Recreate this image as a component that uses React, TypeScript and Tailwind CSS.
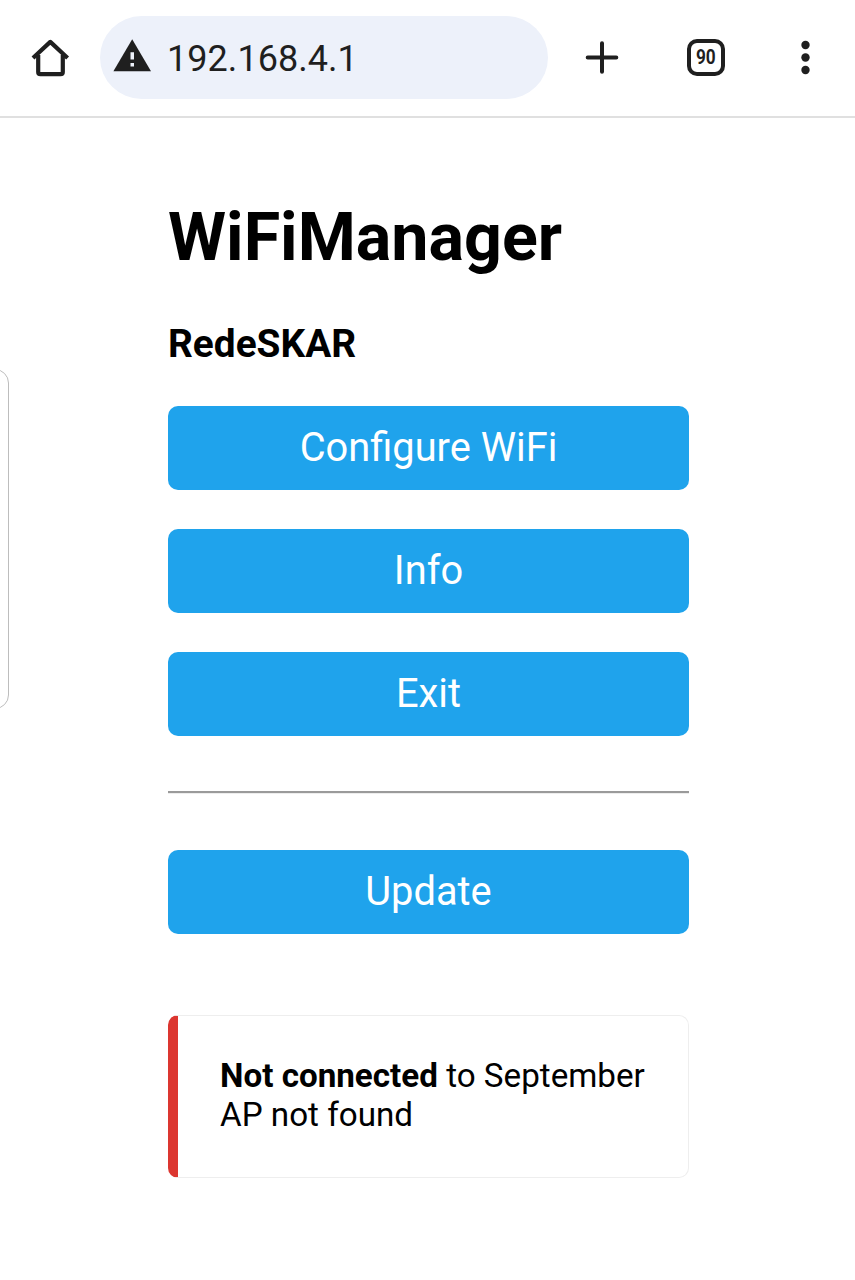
import type { ReactNode } from "react";

function HomeIcon() {
  return (
    <svg className="h-10 w-10 shrink-0" viewBox="0 0 40 40" fill="none" stroke="#1f1f1f" strokeWidth="4.2">
      <path d="M3 20 L20.3 3.9 L37.6 20" strokeLinejoin="round" />
      <path d="M8.2 17 V34 Q8.2 36.2 10.4 36.2 H30.6 Q32.8 36.2 32.8 34 V17" />
    </svg>
  );
}

function WarningIcon() {
  return (
    <svg className="h-[33px] w-[38px] shrink-0" viewBox="0 0 38 33">
      <path d="M19.2 0.3 L38 32.2 H0.4 Z" fill="#1f1f1f" />
      <path d="M17.5 13.2 h3.5 v7.4 h-3.5 Z M17.5 24 h3.5 v3.5 h-3.5 Z" fill="#edf1fa" />
    </svg>
  );
}

function PlusIcon() {
  return (
    <svg className="h-9 w-9 shrink-0" viewBox="0 0 36 36" stroke="#1f1f1f" strokeWidth="4" strokeLinecap="round">
      <path d="M18 3.2 V31.8 M3.7 17.5 H32.3" />
    </svg>
  );
}

function MenuIcon() {
  return (
    <svg className="h-9 w-3 shrink-0" viewBox="0 0 12 36" fill="#1f1f1f">
      <circle cx="5.5" cy="5" r="4.2" />
      <circle cx="5.5" cy="17.5" r="4.2" />
      <circle cx="5.5" cy="30" r="4.2" />
    </svg>
  );
}

function MenuButton({ children }: { children: ReactNode }) {
  return (
    <button className="block h-[84px] w-full rounded-[10px] bg-[#1fa3ec] text-center text-[39.8px] leading-[84px] text-white">
      {children}
    </button>
  );
}

export default function App() {
  return (
    <div className="relative min-h-[1280px] w-full overflow-hidden bg-white font-['Roboto',sans-serif] text-black">
      <header className="flex h-[118px] items-start border-b-2 border-[#e0e0e0] pl-[30px] pt-4">
        <div className="flex h-[83px] items-center">
          <HomeIcon />
        </div>
        <div className="ml-[30px] flex h-[83px] w-[448px] items-center rounded-full bg-[#edf1fa] pl-[13px]">
          <div className="pb-1">
            <WarningIcon />
          </div>
          <span className="ml-4 pt-[2px] text-[36px] leading-[42px] tracking-[0.05px] text-[#1f1f1f]">192.168.4.1</span>
        </div>
        <div className="ml-9 flex h-[83px] items-center">
          <PlusIcon />
          <div className="ml-[67px] flex h-[37px] w-[38px] items-center justify-center rounded-[10px] border-4 border-[#1f1f1f]">
            <span className="scale-x-[0.84] text-[20.5px] font-bold leading-none text-[#1f1f1f]">90</span>
          </div>
          <div className="ml-[75px] flex">
            <MenuIcon />
          </div>
        </div>
      </header>

      <main className="ml-[168px] w-[521px] pt-[80px]">
        <h1 className="text-[66.4px] font-bold leading-[78px]">WiFiManager</h1>
        <h3 className="mt-[45px] text-[38.8px] font-bold leading-[46px]">RedeSKAR</h3>
        <div className="mt-[39px] flex flex-col gap-[39px]">
          <MenuButton>Configure WiFi</MenuButton>
          <MenuButton>Info</MenuButton>
          <MenuButton>Exit</MenuButton>
        </div>
        <hr className="mt-[55px] h-[3px] border-t-2 border-b border-t-[#9a9a9a] border-b-[#ededed]" />
        <div className="mt-[56px]">
          <MenuButton>Update</MenuButton>
        </div>
        <div className="mt-[81px] h-[163px] overflow-hidden rounded-[10px] border border-l-[10px] border-[#eeeeee] border-l-[#dc3630] pl-[42px] pt-[40px] text-[33.2px] leading-[39px]">
          <strong className="font-bold">Not connected</strong> to September
          <br />
          AP not found
        </div>
      </main>

      <div className="absolute -left-[21px] top-[369px] h-[340px] w-[30px] rounded-[14px] border border-[#bdbdbd]" />
    </div>
  );
}
